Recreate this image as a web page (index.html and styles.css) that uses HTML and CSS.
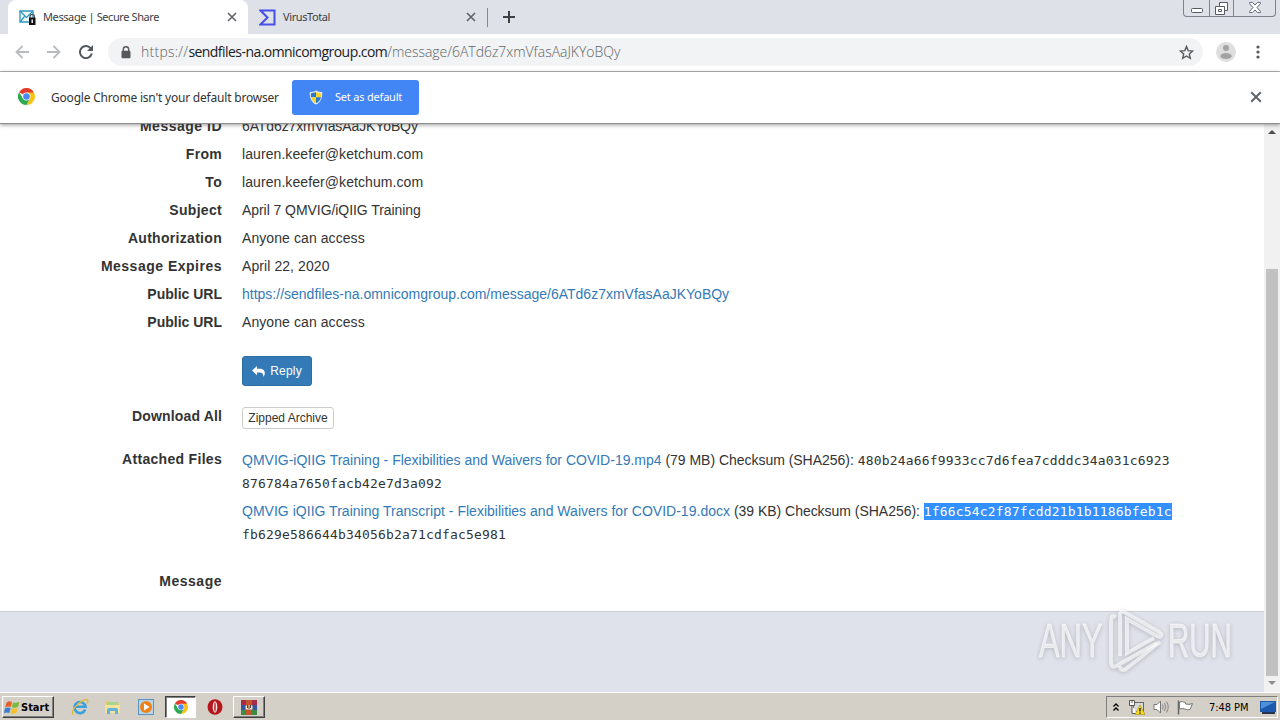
FILE: index.html
```html
<!DOCTYPE html>
<html lang="en">

<head>
    <meta charset="UTF-8">
    <meta name="viewport" content="width=device-width, initial-scale=1.0">
    <title>Message | Secure Share</title>
    <link rel="stylesheet" href="styles.css">
</head>

<body>
    <svg class="defs" width="0" height="0">
        <symbol id="chrome-logo" viewBox="0 0 18 18">
            <path fill="#e33b2e" d="M9 9L1.2 4.5A9 9 0 0 1 16.8 4.5Z" />
            <path fill="#fbc116" d="M12.7 11.1L9 18A9 9 0 0 0 16.9 4.8H9Z" />
            <path fill="#2da94f" d="M5.3 11.1L1.2 4.5A9 9 0 0 0 9 18L12.7 11.1Z" />
            <circle cx="9" cy="9" r="4.2" fill="#fff" />
            <circle cx="9" cy="9" r="3.5" fill="#4a8af4" />
        </symbol>
        <symbol id="close" viewBox="0 0 10 10">
            <path d="M1 1L9 9M9 1L1 9" fill="none" stroke="currentColor" stroke-width="1.6" />
        </symbol>
    </svg>

    <div class="tabstrip">
        <div class="tab active">
            <svg class="favicon" width="17" height="17" viewBox="0 0 17 17">
                <path d="M1 2H14V13H1Z" fill="#eaf6fb" stroke="#3295b8" stroke-width="1.3" />
                <path d="M1 2L7.5 8.5L14 2M1 13L5.5 7.5" fill="none" stroke="#3295b8" stroke-width="1.2" />
                <path d="M11 9V7.5A2.2 2.2 0 0 1 15.4 7.5V9" fill="none" stroke="#555" stroke-width="1.2" />
                <rect x="10" y="8.5" width="6.5" height="7.5" fill="#111" />
                <rect x="12.5" y="10.5" width="1.4" height="3.5" fill="#fff" />
            </svg>
            <span class="tab-title">Message | Secure Share</span>
            <svg class="tab-close" width="10" height="10"><use href="#close" /></svg>
        </div>
        <div class="tab">
            <svg class="favicon" width="17" height="17" viewBox="0 0 17 17">
                <path d="M1.5 1.5H15.5V15.5H1.5L8.5 8.5Z" fill="none" stroke="#4450e6" stroke-width="2" />
            </svg>
            <span class="tab-title">VirusTotal</span>
            <svg class="tab-close" width="10" height="10"><use href="#close" /></svg>
        </div>
        <div class="tab-divider"></div>
        <svg class="new-tab" width="12" height="12" viewBox="0 0 12 12">
            <path d="M6 0V12M0 6H12" stroke="#3c4043" stroke-width="2" />
        </svg>
        <div class="window-buttons">
            <span class="win-btn">
                <svg width="12" height="5" viewBox="0 0 12 5"><rect x=".5" y=".5" width="11" height="4" rx="1" fill="#fff" stroke="#555b66" /></svg>
            </span>
            <span class="win-btn restore">
                <svg width="13" height="13" viewBox="0 0 13 13">
                    <path d="M4.5 .5H12.5V8.5H9.5V12.5H.5V4.5H4.5Z" fill="#fff" stroke="#555b66" />
                    <path d="M4.5 4.5H9.5V8.5M3.5 7.5H6.5V9.5H3.5Z" fill="none" stroke="#555b66" />
                </svg>
            </span>
            <span class="win-btn exit">
                <svg width="12" height="11" viewBox="0 0 12 11">
                    <path d="M.5 .5H3.5L6 3L8.5 .5H11.5V1.5L8 5.5L11.5 9.5V10.5H8.5L6 8L3.5 10.5H.5V9.5L4 5.5L.5 1.5Z" fill="#fff" stroke="#666c76" />
                </svg>
            </span>
        </div>
    </div>

    <div class="toolbar">
        <svg class="nav" width="14" height="14" viewBox="0 0 14 14">
            <path d="M14 7H1.5M7.5 1L1.5 7L7.5 13" fill="none" stroke="#b9bbbe" stroke-width="1.8" />
        </svg>
        <svg class="nav" width="14" height="14" viewBox="0 0 14 14">
            <path d="M0 7H12.5M6.5 1L12.5 7L6.5 13" fill="none" stroke="#b9bbbe" stroke-width="1.8" />
        </svg>
        <svg class="nav" width="14" height="14" viewBox="0 0 14 14">
            <path d="M12 3.8A6 6 0 1 0 12.8 8.6" fill="none" stroke="#55585c" stroke-width="2" />
            <path d="M14 0V6H8Z" fill="#55585c" />
        </svg>
        <div class="omnibox">
            <svg class="lock" width="10" height="13" viewBox="0 0 10 13">
                <path d="M2.3 6V3.5A2.7 2.7 0 0 1 7.7 3.5V6" fill="none" stroke="#55585c" stroke-width="1.4" />
                <rect x=".5" y="4.7" width="9" height="7.6" rx="1" fill="#55585c" />
            </svg>
            <span class="url"><span class="scheme">https://</span><span class="host">sendfiles-na.omnicomgroup.com</span><span class="path">/message/6ATd6z7xmVfasAaJKYoBQy</span></span>
            <svg class="star" width="15" height="15" viewBox="0 0 15 15">
                <path d="M7.5 1.5L9.2 5.6L13.7 6L10.3 8.9L11.3 13.3L7.5 11L3.7 13.3L4.7 8.9L1.3 6L5.8 5.6Z" fill="none" stroke="#55585c" stroke-width="1.4" />
            </svg>
        </div>
        <svg class="avatar" width="20" height="20" viewBox="0 0 20 20">
            <circle cx="10" cy="10" r="10" fill="#dedede" />
            <circle cx="10" cy="6" r="3" fill="#a2a3a5" />
            <ellipse cx="10" cy="14" rx="5.8" ry="3" fill="#a2a3a5" />
        </svg>
        <svg class="menu" width="4" height="14" viewBox="0 0 4 14">
            <circle cx="2" cy="2" r="1.6" fill="#55585c" />
            <circle cx="2" cy="7" r="1.6" fill="#55585c" />
            <circle cx="2" cy="12" r="1.6" fill="#55585c" />
        </svg>
    </div>

    <div class="infobar">
        <svg class="infobar-logo" width="17" height="17"><use href="#chrome-logo" /></svg>
        <span class="infobar-text">Google Chrome isn't your default browser</span>
        <div class="default-btn">
            <svg width="14" height="15" viewBox="0 0 14 15">
                <path d="M7 .5C9 1.7 11 2 13.2 2C13.6 8 11.5 12.5 7 14.5C2.5 12.5 .4 8 .8 2C3 2 5 1.7 7 .5Z" fill="#e8edf2" />
                <path d="M7 2V7.3H2C1.8 5.7 1.8 4.5 2 3.2C4 3.1 5.5 2.8 7 2Z" fill="#2d79c7" />
                <path d="M7 2V7.3H12C12.2 5.7 12.2 4.5 12 3.2C10 3.1 8.5 2.8 7 2Z" fill="#f8d52c" />
                <path d="M2 7.3H7V13.3C4.3 12 2.6 10 2 7.3Z" fill="#f8d52c" />
                <path d="M12 7.3H7V13.3C9.7 12 11.4 10 12 7.3Z" fill="#2d79c7" />
            </svg>
            <span>Set as default</span>
        </div>
        <svg class="infobar-close" width="12" height="12"><use href="#close" /></svg>
    </div>

    <div class="viewport">
        <div class="page">
            <div class="details">
                <div class="row"><label class="wide">Message ID</label><span class="id">6ATd6z7xmVfasAaJKYoBQy</span></div>
                <div class="row"><label>From</label><span>lauren.keefer@ketchum.com</span></div>
                <div class="row"><label>To</label><span>lauren.keefer@ketchum.com</span></div>
                <div class="row"><label>Subject</label><span class="subject">April 7 QMVIG/iQIIG Training</span></div>
                <div class="row"><label>Authorization</label><span>Anyone can access</span></div>
                <div class="row"><label class="wide">Message Expires</label><span>April 22, 2020</span></div>
                <div class="row"><label class="tight">Public URL</label><a>https://sendfiles-na.omnicomgroup.com/message/6ATd6z7xmVfasAaJKYoBQy</a></div>
                <div class="row"><label class="tight">Public URL</label><span>Anyone can access</span></div>
                <div class="row reply-row">
                    <label></label>
                    <div class="btn btn-primary">
                        <svg width="13" height="11" viewBox="0 0 13 11">
                            <path d="M5 0V2.7H7.5C11.5 2.7 13 5 12.8 7.5C12.7 9 12 10.3 11.4 11C11.6 8.2 10.5 6.5 7.5 6.5H5V9.3L0 4.6Z" fill="#fff" />
                        </svg>
                        <span>Reply</span>
                    </div>
                </div>
                <div class="row download-row"><label class="snug">Download All</label><div class="btn btn-default">Zipped Archive</div></div>
                <div class="row files-row">
                    <label>Attached Files</label>
                    <div class="files">
                        <div class="file">
                            <div><a>QMVIG-iQIIG Training - Flexibilities and Waivers for COVID-19.mp4</a> <span class="meta">(79 MB) Checksum (SHA256):</span> <code>480b24a66f9933cc7d6fea7cdddc34a031c6923</code></div>
                            <div><code>876784a7650facb42e7d3a092</code></div>
                        </div>
                        <div class="file">
                            <div><a class="transcript">QMVIG iQIIG Training Transcript - Flexibilities and Waivers for COVID-19.docx</a> <span class="meta">(39 KB) Checksum (SHA256):</span> <code class="selected">1f66c54c2f87fcdd21b1b1186bfeb1c</code></div>
                            <div><code>fb629e586644b34056b2a71cdfac5e981</code></div>
                        </div>
                    </div>
                </div>
                <div class="row message-row"><label class="wide">Message</label></div>
            </div>
            <div class="footer"></div>
            <div class="watermark">
                <div><span class="any">ANY</span></div>
                <svg width="56" height="64" viewBox="0 0 56 64">
                    <path d="M8 8C4 6 3 8 3 12V52C3 58 6 59 10 56L49 34" />
                    <path d="M12 47V6C12 2 15 2 18 4L51 23C55 26 53 29 49 27L19 10V44L46 29" />
                    <path d="M52 33L18 60C15 62 12 61 12 57" />
                </svg>
                <div><span class="run">RUN</span></div>
            </div>
        </div>
        <div class="scrollbar">
            <svg width="8" height="4" viewBox="0 0 8 4"><path d="M0 4L4 0L8 4Z" fill="#4c4c4c" /></svg>
            <div class="thumb"></div>
            <svg width="8" height="4" viewBox="0 0 8 4"><path d="M0 0L4 4L8 0Z" fill="#8c8c8c" /></svg>
        </div>
    </div>

    <div class="taskbar">
        <div class="start">
            <svg width="16" height="15" viewBox="0 0 16 15">
                <path d="M2.5 2.5Q5.5 .5 8 2L6.8 7Q4 5.7 1.2 7.3Z" fill="#e8602c" />
                <path d="M9 2.4Q12 3.5 15.5 1.8L14 7Q11 8.5 7.8 7.3Z" fill="#7dba3c" />
                <path d="M1 8.3Q4 6.8 6.6 8L5.4 13Q3 11.8 0 13Z" fill="#3a7fd0" />
                <path d="M7.6 8.3Q10.5 9.5 13.7 8L12.3 13Q9.5 14.5 6.4 13.3Z" fill="#f6bf28" />
            </svg>
            <span>Start</span>
        </div>
        <div class="task ie">
            <svg width="18" height="18" viewBox="0 0 18 18">
                <path d="M14.2 11.5A5.5 5.5 0 1 1 14.5 8.8H5" fill="none" stroke="#3a9fdc" stroke-width="2.6" />
                <path d="M2 16.5C-1 13 9 2 15.5 1.5C17.5 1.5 17 4 16 5.5" fill="none" stroke="#e0b83b" stroke-width="1.3" />
            </svg>
        </div>
        <div class="task">
            <svg width="17" height="16" viewBox="0 0 17 16">
                <path d="M1 2H6L7 4H15V14H1Z" fill="#e9cf72" />
                <path d="M3 3H14V9H3Z" fill="#a8d48d" />
                <path d="M1 6H16V14H1Z" fill="#f5e397" />
                <path d="M3 15V10.5Q3 9 5 9H12Q14 9 14 10.5V15H11V12H6V15Z" fill="#62b2df" />
            </svg>
        </div>
        <div class="task">
            <svg width="16" height="16" viewBox="0 0 16 16">
                <rect x=".5" y=".5" width="15" height="15" fill="#b6d4ec" stroke="#5b93c5" />
                <circle cx="8" cy="8" r="6" fill="#ee8419" />
                <path d="M6 4.5L11.5 8L6 11.5Z" fill="#fff" />
            </svg>
        </div>
        <div class="task pressed"><svg width="14" height="14"><use href="#chrome-logo" /></svg></div>
        <div class="task opera">
            <svg width="16" height="16" viewBox="0 0 16 16">
                <ellipse cx="8" cy="8" rx="7.5" ry="7.8" fill="#b5161b" />
                <ellipse cx="8" cy="8" rx="2.3" ry="5.8" fill="#f6e2df" />
                <ellipse cx="8" cy="8" rx=".7" ry="4.8" fill="#a91a1a" />
            </svg>
        </div>
        <div class="task raised">
            <svg width="16" height="15" viewBox="0 0 16 15">
                <rect width="16" height="5" fill="#a62b4b" />
                <rect y="5" width="16" height="5" fill="#35559d" />
                <rect y="10" width="16" height="5" fill="#3d8a43" />
                <rect x="5" width="6" height="15" fill="#c5532b" />
                <path d="M4.5 5.5H11.5V9.5H4.5Z" fill="#eee1c1" />
                <path d="M6.5 5V8M8 6V9M9.5 5V8" stroke="#5c4438" />
            </svg>
        </div>
        <div class="tray">
            <svg class="chevrons" width="6" height="9" viewBox="0 0 6 9"><path d="M.5 3.5L3 1L5.5 3.5M.5 7.5L3 5L5.5 7.5" fill="none" stroke="#000" stroke-width="1.3" /></svg>
            <svg class="network" width="16" height="15" viewBox="0 0 16 15">
                <rect x="4.5" y="2.5" width="10" height="9" fill="#d9d9d6" stroke="#666" />
                <path d="M.5 .5H5.5V5.5H.5ZM3 5.5V13.5H8" fill="#fff" stroke="#555" />
                <path d="M3 0V3" stroke="#555" />
                <path d="M11 5L16 14.5H6Z" fill="#f7dc19" stroke="#a58c12" stroke-width=".6" />
                <path d="M11 8V11.5M11 12.5V13.7" stroke="#111" stroke-width="1.3" />
            </svg>
            <svg class="volume" width="16" height="14" viewBox="0 0 16 14">
                <path d="M1 4.5H4L7.5 1V13L4 9.5H1Z" fill="#fff" stroke="#777" />
                <path d="M9.5 4.5Q11 7 9.5 9.5M11.5 3Q14 7 11.5 11M13.5 1.5Q17 7 13.5 12.5" fill="none" stroke="#888" />
            </svg>
            <svg class="flag" width="17" height="15" viewBox="0 0 17 15">
                <path d="M1.5 .5V14.5" stroke="#666" stroke-width="1.5" />
                <path d="M2.5 2Q5 1 8.5 2.5V4Q12 5 15.5 3.5L13 9.5Q10 10.5 8 9Q5 8 2.5 9Z" fill="#fff" stroke="#777" />
            </svg>
            <span class="clock">7:48 PM</span>
            <svg class="desktop" width="16" height="13" viewBox="0 0 16 13">
                <rect width="16" height="11" fill="#1c59ac" />
                <path d="M1 1H15L1 8Z" fill="#4c91d8" />
                <rect x="2" y="11" width="13" height="2" fill="#26344d" />
            </svg>
        </div>
    </div>
</body>

</html>
```
FILE: styles.css
```css
* {
    box-sizing: border-box;
}

body {
    margin: 0;
    width: 1280px;
    height: 720px;
    overflow: hidden;
    display: flex;
    flex-direction: column;
    background: #fff;
    color: #333;
    font-family: "Liberation Sans", Arial, sans-serif;
    font-size: 14px;
}

svg {
    flex: none;
    display: block;
}

.defs {
    position: absolute;
}

/* Browser window */
.tabstrip {
    height: 34px;
    flex: none;
    display: flex;
    align-items: center;
    background: #dee1e8;
    font-family: "Noto Sans", sans-serif;
    font-size: 11px;
    color: #3c4043;
}

.tab {
    width: 239px;
    height: 34px;
    display: flex;
    align-items: center;
    padding: 0 11px;
}

.tab.active {
    width: 240px;
    margin-left: 8px;
    background: #fff;
    border-radius: 8px 8px 0 0;
}

.tab-title {
    flex: 1;
    margin-left: 7px;
    padding-bottom: 2px;
    letter-spacing: -0.4px;
    white-space: nowrap;
}

.tab-close {
    color: #5f6368;
}

.tab-divider {
    width: 1px;
    height: 19px;
    background: #85898f;
}

.new-tab {
    margin-left: 15px;
}

.window-buttons {
    display: flex;
    align-self: flex-start;
    height: 17px;
    margin-left: auto;
    margin-right: 4px;
    border: 1px solid #7e828b;
    border-top: 0;
    border-radius: 0 0 4px 4px;
}

.win-btn {
    width: 25px;
    display: flex;
    justify-content: center;
    align-items: flex-end;
    padding-bottom: 3px;
}

.win-btn.restore {
    padding-bottom: 1px;
    border-left: 1px solid #7e828b;
    border-right: 1px solid #7e828b;
}

.win-btn.exit {
    width: 41px;
}

.toolbar {
    height: 38px;
    flex: none;
    display: flex;
    align-items: center;
    padding: 0 20px 1px 15px;
    border-bottom: 1px solid #b3b3b3;
}

.nav {
    margin-right: 18px;
}

.omnibox {
    width: 1095px;
    height: 28px;
    margin-left: -3px;
    display: flex;
    align-items: center;
    padding: 0 9px 0 13px;
    border-radius: 14px;
    background: #f1f3f4;
}

.url {
    flex: 1;
    margin-left: 10px;
    padding-bottom: 1px;
    font-family: "Open Sans", sans-serif;
    font-size: 14px;
    font-weight: 300;
    color: #5f6368;
    white-space: nowrap;
}

.scheme {
    letter-spacing: 0.25px;
}

.host {
    font-weight: 400;
    letter-spacing: -0.55px;
    color: #202124;
}

.path {
    letter-spacing: -0.03px;
}

.avatar {
    margin-left: 13px;
}

.menu {
    margin-left: 20px;
}

.infobar {
    height: 52px;
    flex: none;
    display: flex;
    align-items: center;
    padding: 0 18px;
    border-bottom: 1px solid #8e8e8e;
    font-family: "Noto Sans", sans-serif;
    font-size: 12px;
    position: relative;
    box-shadow: 0 1px 4px rgba(0, 0, 0, 0.4);
}

.infobar-logo,
.infobar-close {
    margin-bottom: 2px;
}

.infobar-text {
    width: 241px;
    margin-left: 16px;
    padding-bottom: 1px;
    letter-spacing: -0.2px;
    white-space: nowrap;
}

.default-btn {
    width: 127px;
    height: 35px;
    display: flex;
    align-items: center;
    padding-left: 17px;
    border-radius: 3px;
    background: #4285f4;
    color: #fff;
    font-size: 11px;
    letter-spacing: -0.2px;
    white-space: nowrap;
}

.default-btn span {
    margin-left: 12px;
    padding-bottom: 2px;
}

.infobar-close {
    margin-left: auto;
    color: #5f6368;
}

/* Page */
.viewport {
    flex: 1;
    min-height: 0;
    display: flex;
    overflow: hidden;
}

.page {
    width: 1264px;
    position: relative;
    display: flex;
    flex-direction: column;
    overflow: hidden;
}

.details {
    flex: none;
    margin-top: -12px;
    height: 500px;
    border-bottom: 1px solid #ccced3;
}

.row {
    height: 28px;
    display: flex;
    line-height: 28px;
    white-space: nowrap;
}

.row > span {
    letter-spacing: 0.08px;
}

.row > .id {
    letter-spacing: -0.11px;
}

.row > .subject {
    letter-spacing: -0.06px;
}

.row label {
    width: 222px;
    flex: none;
    margin-right: 20px;
    text-align: right;
    font-weight: bold;
    letter-spacing: 0.3px;
}

.row .wide {
    letter-spacing: 0.5px;
}

.row .snug {
    letter-spacing: 0.15px;
}

.row .tight {
    letter-spacing: 0;
}

a {
    color: #337ab7;
}

.transcript {
    letter-spacing: 0.02px;
}

.btn {
    display: flex;
    align-items: center;
    justify-content: center;
    border-radius: 3px;
    font-size: 12px;
}

.btn-primary {
    width: 70px;
    height: 30px;
    gap: 5px;
    background: #337ab7;
    border: 1px solid #2e6da4;
    color: #fff;
    letter-spacing: 0.2px;
}

.btn-default {
    width: 92px;
    height: 22px;
    margin-top: 5px;
    border: 1px solid #ccc;
}

.reply-row {
    height: 30px;
    margin-top: 20px;
}

.download-row {
    margin-top: 16px;
}

.files-row {
    height: 102px;
    margin-top: 15px;
}

.file {
    height: 51px;
    padding-top: 4px;
    line-height: 23px;
}

.file div {
    height: 23px;
}

.meta {
    letter-spacing: -0.03px;
}

code {
    font-family: "DejaVu Sans Mono", monospace;
    font-size: 13px;
    letter-spacing: 0.173px;
}

.selected {
    padding: 1px 0;
    background: #3390ff;
    color: #fff;
}

.message-row {
    margin-top: 20px;
}

.footer {
    flex: 1;
    background: #dfe2ea;
}

.watermark {
    position: absolute;
    left: 1039px;
    top: 485px;
    display: flex;
    align-items: center;
    color: rgba(255, 255, 255, 0.65);
    filter: drop-shadow(0 1px 2px rgba(80, 85, 95, 0.45));
}

.watermark div {
    width: 69px;
    height: 64px;
}

.watermark span {
    display: inline-block;
    font-size: 49px;
    line-height: 62px;
    transform-origin: left;
    -webkit-text-stroke: 1px rgba(255, 255, 255, 0.5);
}

.watermark .any {
    transform: scaleX(0.63);
}

.watermark .run {
    margin-left: 4px;
    transform: scaleX(0.6);
}

.watermark path {
    fill: none;
    stroke: rgba(255, 255, 255, 0.65);
    stroke-width: 4;
}

.scrollbar {
    width: 16px;
    display: flex;
    flex-direction: column;
    align-items: center;
    padding: 6px 0 7px;
    background: #f1f1f1;
}

.thumb {
    width: 12px;
    height: 407px;
    margin-top: auto;
    margin-bottom: 5px;
    background: #c1c1c1;
}

/* Windows taskbar */
.taskbar {
    height: 28px;
    flex: none;
    display: flex;
    align-items: center;
    padding: 1px 2px 0;
    background: #d4d0c8;
    border-top: 1px solid #fff;
    color: #000;
}

.start {
    width: 52px;
    height: 22px;
    display: flex;
    align-items: center;
    gap: 1px;
    padding-left: 1px;
    border: 1px solid;
    border-color: #fff #404040 #404040 #fff;
    box-shadow: inset -1px -1px #808080;
    font-family: "DejaVu Sans Condensed", "DejaVu Sans", sans-serif;
    font-size: 11px;
    font-weight: bold;
}

.task {
    width: 33px;
    height: 22px;
    display: flex;
    align-items: center;
    justify-content: center;
}

.ie {
    margin-left: 9px;
}

.pressed {
    width: 31px;
    margin-left: 3px;
    background: #fff;
    border: 1px solid;
    border-color: #404040 #fff #fff #404040;
    box-shadow: inset 1px 1px #808080;
}

.opera {
    margin-left: 2px;
}

.raised {
    width: 32px;
    margin-left: 2px;
    border: 1px solid;
    border-color: #fff #404040 #404040 #fff;
    box-shadow: inset -1px -1px #808080;
}

.tray {
    width: 172px;
    height: 22px;
    display: flex;
    align-items: center;
    margin-left: auto;
    padding-left: 6px;
    border: 1px solid;
    border-color: #808080 #fff #fff #808080;
}

.network {
    margin-left: 10px;
}

.volume {
    margin-left: 8px;
}

.flag {
    margin-left: 8px;
}

.clock {
    width: 40px;
    margin-left: 15px;
    font-family: "DejaVu Sans Condensed", "DejaVu Sans", sans-serif;
    font-size: 11px;
    letter-spacing: -0.05px;
    white-space: nowrap;
}

.desktop {
    margin-left: 11px;
}
```
